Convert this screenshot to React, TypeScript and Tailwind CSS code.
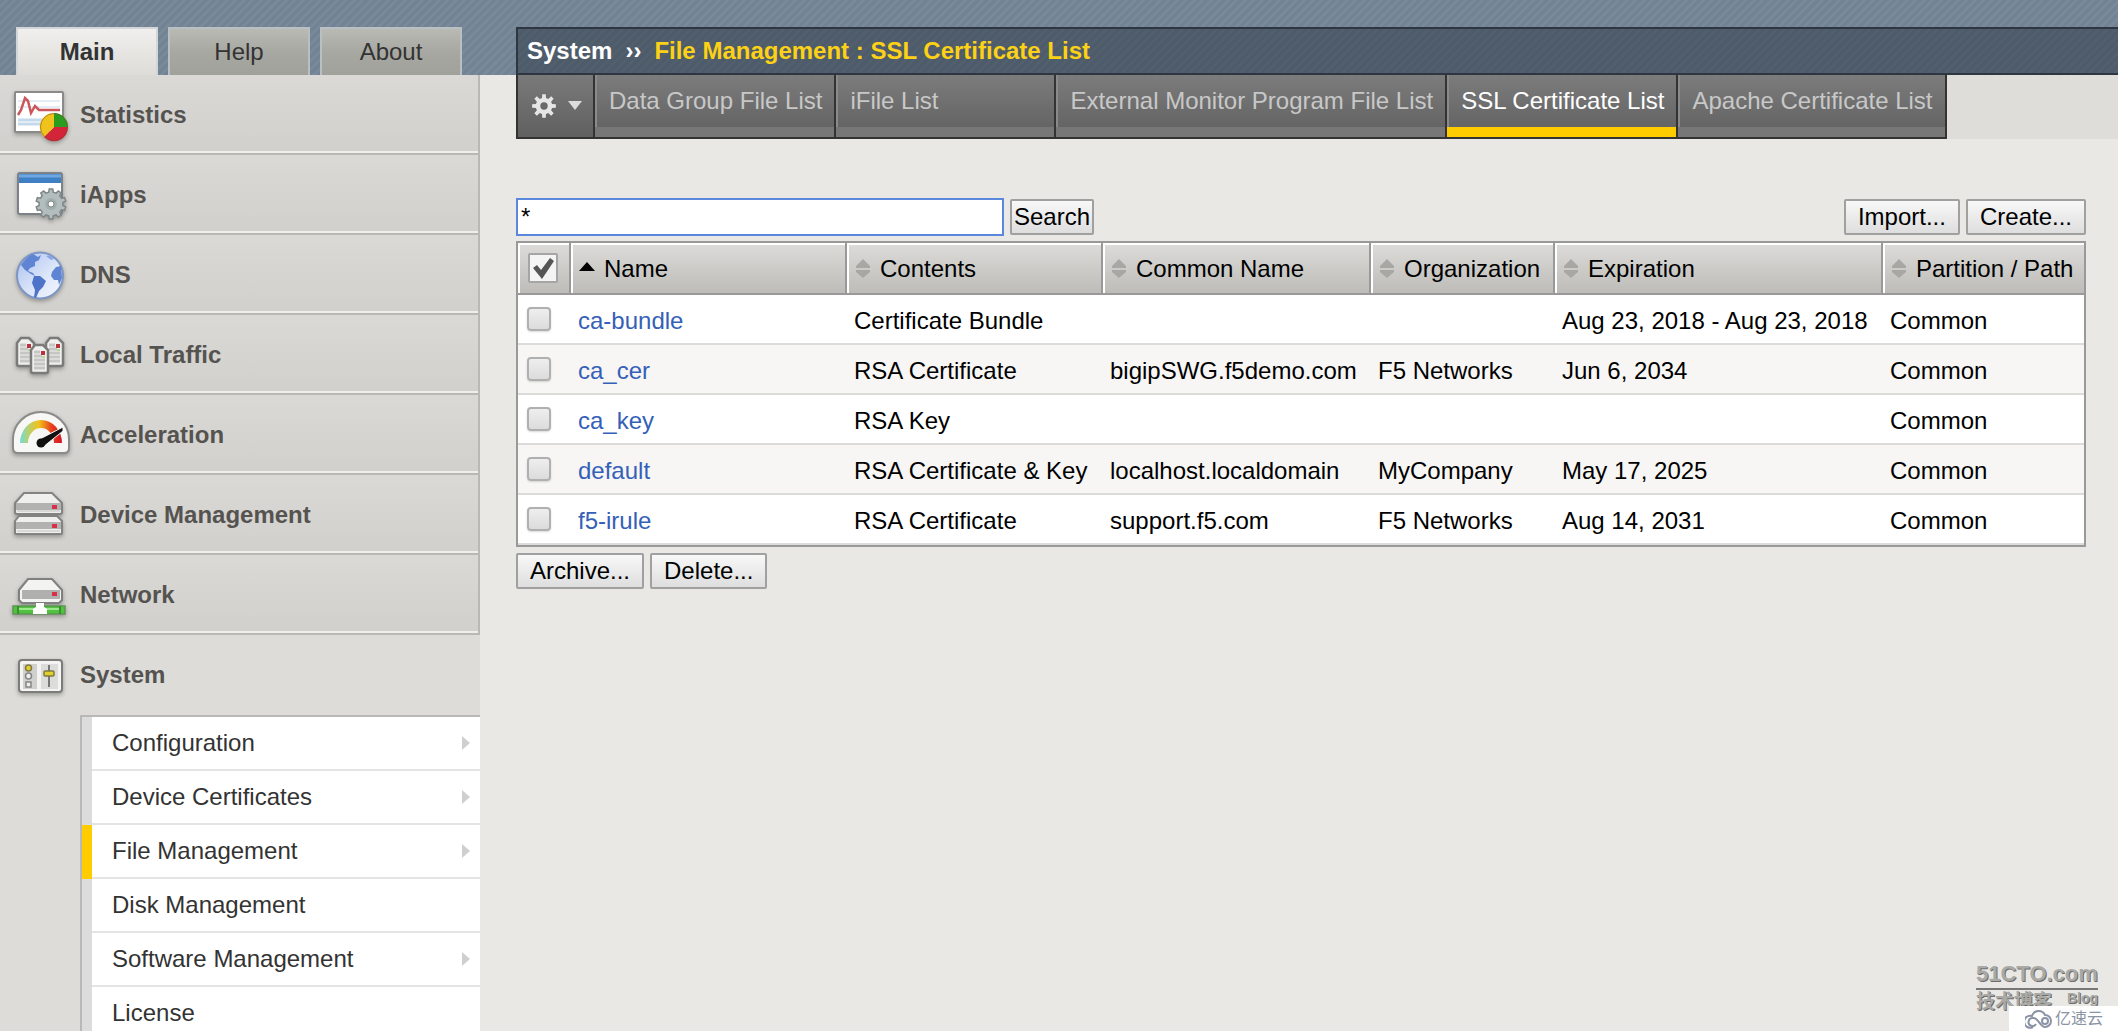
import { useState } from 'react';
import type { ReactNode } from 'react';
import clsx from 'clsx';

interface Cert {
  name: string;
  contents: string;
  commonName?: string;
  organization?: string;
  expiration?: string;
  partition: string;
}

const certs: Cert[] = [
  { name: 'ca-bundle', contents: 'Certificate Bundle', expiration: 'Aug 23, 2018 - Aug 23, 2018', partition: 'Common' },
  { name: 'ca_cer', contents: 'RSA Certificate', commonName: 'bigipSWG.f5demo.com', organization: 'F5 Networks', expiration: 'Jun 6, 2034', partition: 'Common' },
  { name: 'ca_key', contents: 'RSA Key', partition: 'Common' },
  { name: 'default', contents: 'RSA Certificate & Key', commonName: 'localhost.localdomain', organization: 'MyCompany', expiration: 'May 17, 2025', partition: 'Common' },
  { name: 'f5-irule', contents: 'RSA Certificate', commonName: 'support.f5.com', organization: 'F5 Networks', expiration: 'Aug 14, 2031', partition: 'Common' },
];

const columns = ['Name', 'Contents', 'Common Name', 'Organization', 'Expiration', 'Partition / Path'];

const tabs = [
  'Data Group File List',
  'iFile List',
  'External Monitor Program File List',
  'SSL Certificate List',
  'Apache Certificate List',
];

const submenu = [
  { label: 'Configuration', more: true },
  { label: 'Device Certificates', more: true },
  { label: 'File Management', more: true, active: true },
  { label: 'Disk Management' },
  { label: 'Software Management', more: true },
  { label: 'License' },
];

function gearPath(cx: number, cy: number, outer: number, inner: number, teeth: number) {
  const step = (Math.PI * 2) / teeth;
  const points: string[] = [];
  for (let i = 0; i < teeth; i++) {
    const a = i * step - Math.PI / 2;
    const corners: [number, number][] = [
      [-0.3, inner],
      [-0.19, outer],
      [0.19, outer],
      [0.3, inner],
    ];
    corners.forEach(([t, r]) => {
      points.push(`${(cx + Math.cos(a + t * step) * r).toFixed(2)} ${(cy + Math.sin(a + t * step) * r).toFixed(2)}`);
    });
  }
  return `M${points.join('L')}Z`;
}

function Icon({ children }: { children: ReactNode }) {
  return (
    <svg viewBox="0 0 60 60" className="h-15 w-15 shrink-0 drop-shadow-[0_2px_2px_rgba(0,0,0,0.3)]" aria-hidden="true">
      {children}
    </svg>
  );
}

function StatisticsIcon() {
  return (
    <Icon>
      <rect x="5" y="7" width="48" height="40" rx="1" fill="#fff" stroke="#8a8a8a" strokeWidth="2" />
      <path d="M8 16H50M8 22H50" stroke="#e4ecf4" strokeWidth="2" />
      <path d="M8 35H50M8 39H50" stroke="#c3d9ec" strokeWidth="3" />
      <path d="M8 30 11 25 15 13 18 16 21 28 25 21 29 25H50" fill="none" stroke="#c9575b" strokeWidth="2.5" />
      <path d="M44 42V28A14 14 0 0 1 58 42Z" fill="#2a9d1f" />
      <path d="M44 42H58A14 14 0 0 1 34 52Z" fill="#d3243a" />
      <path d="M44 42 34 52A14 14 0 0 1 44 28Z" fill="#f0c21c" />
      <circle cx="44" cy="42" r="13.5" fill="none" stroke="#7a4a20" strokeOpacity="0.5" />
    </Icon>
  );
}

function IAppsIcon() {
  return (
    <Icon>
      <rect x="8" y="8" width="44" height="41" rx="2" fill="#fff" stroke="#7c8288" strokeWidth="2" />
      <rect x="9" y="9" width="42" height="9" fill="#3f7fc4" />
      <path d="M9 11H51" stroke="#6fa7e0" strokeWidth="3" />
      <path d={gearPath(41, 39, 15, 12, 10)} fill="#b3bdbd" stroke="#7d8787" strokeWidth="1.5" />
      <circle cx="41" cy="39" r="6" fill="#a2adad" />
      <circle cx="41" cy="39" r="3" fill="#fff" stroke="#7d8787" />
    </Icon>
  );
}

function DnsIcon() {
  return (
    <Icon>
      <defs>
        <linearGradient id="sea" x1="0" y1="0" x2="1" y2="1">
          <stop offset="0" stopColor="#a9c0ee" />
          <stop offset="0.6" stopColor="#dfe8fa" />
          <stop offset="1" stopColor="#f4f8ff" />
        </linearGradient>
      </defs>
      <circle cx="30" cy="30.5" r="23" fill="url(#sea)" stroke="#7d96c4" strokeWidth="2" />
      <path
        d="M11 20C14 15 18 11 23 9L28 12 31 10 29 15 25 17 25 21 20 23 18 26 23 28 25 31 21 29 15 25Z"
        fill="#5e84d3"
      />
      <path d="M24 31 30 31 36 36 33 42 29 46 26 53 24 52 25 45 22 38Z" fill="#4d74c8" />
      <path d="M51 21 46 22 42 27 41 31 44 35 48 35 49 40 52 33Z" fill="#5e84d3" />
      <path d="M36 11 40 10 44 14 41 15Z" fill="#8aa6e2" />
    </Icon>
  );
}

function Server({ x, y }: { x: number; y: number }) {
  return (
    <g transform={`translate(${x} ${y})`}>
      <path d="M1 6 5 1H13L18 6V27Q18 29 16 29H3Q1 29 1 27Z" fill="#f0f0ef" stroke="#7b7b7a" strokeWidth="2.5" />
      <path d="M4 8H10M4 12H12M4 16H15M4 20H15M4 24H15" stroke="#c6c6c5" strokeWidth="3" />
      <rect x="11" y="7" width="4" height="4" fill="#b8323c" />
      <rect x="12" y="12" width="3" height="2" fill="#b8d890" />
    </g>
  );
}

function LocalTrafficIcon() {
  return (
    <Icon>
      <Server x={6} y={12} />
      <Server x={35} y={12} />
      <Server x={20} y={19} />
    </Icon>
  );
}

function AccelerationIcon() {
  return (
    <Icon>
      <defs>
        <linearGradient id="dial">
          <stop offset="0" stopColor="#6fdcd8" />
          <stop offset="0.2" stopColor="#b8d070" />
          <stop offset="0.45" stopColor="#f2c21a" />
          <stop offset="0.75" stopColor="#e8401c" />
          <stop offset="1" stopColor="#d3142a" />
        </linearGradient>
      </defs>
      <path d="M3 34A28 27 0 0 1 59 34V43Q59 48 54 48H8Q3 48 3 43Z" fill="#f7f7f5" stroke="#8b8b8a" strokeWidth="2" />
      <path d="M10 38A21 23 0 0 1 52 38H44A13 15 0 0 0 18 38Z" fill="url(#dial)" />
      <path d="M28 35 53 22 53 26 33 42Z" fill="#111" stroke="#f7f7f5" strokeWidth="1" />
      <circle cx="31" cy="38" r="4.5" fill="#111" />
    </Icon>
  );
}

function Box({ y, low }: { y: number; low?: boolean }) {
  return (
    <g transform={`translate(0 ${y})`}>
      <path
        d={low ? 'M5 6 9 1H47L52 6V18Q52 19 51 19H6Q5 19 5 18Z' : 'M5 11 14 1H42L52 11V20Q52 22 50 22H7Q5 22 5 20Z'}
        fill="#efefee"
        stroke="#838382"
        strokeWidth="2"
      />
      <rect x="6" y={low ? 7 : 11} width="45" height="7" fill="#b2b2b1" />
      <path d={low ? 'M7 16H50' : 'M7 19H50'} stroke="#d8d8d7" strokeWidth="2" />
      <rect x="42" y={low ? 9 : 13} width="5" height="4" fill="#d8304a" />
    </g>
  );
}

function DeviceIcon() {
  return (
    <Icon>
      <Box y={30} low />
      <Box y={7} />
    </Icon>
  );
}

function NetworkIcon() {
  return (
    <Icon>
      <path d="M9 25 18 14H42L52 25V35L49 38H12L9 35Z" fill="#f3f3f2" stroke="#80807f" strokeWidth="2" />
      <rect x="12" y="25" width="38" height="9" fill="#b0b0af" />
      <rect x="42" y="27" width="5" height="4" fill="#d8304a" />
      <rect x="3" y="41" width="52" height="8" fill="#4fc23e" stroke="#5f9455" strokeWidth="1.5" />
      <path d="M9 44H49" stroke="#9be88c" strokeWidth="2" />
      <path d="M8 41V49M50 41V49" stroke="#3e8d35" strokeWidth="2" />
      <path d="M26 38H34V42L37 44V49H23V44L26 42Z" fill="#fff" />
    </Icon>
  );
}

function SystemIcon() {
  return (
    <Icon>
      <rect x="9" y="15" width="43" height="32" rx="3" fill="#f4f4f3" stroke="#7c7c7b" strokeWidth="2" />
      <rect x="13" y="19" width="14" height="25" fill="#d0d0cf" />
      <rect x="31" y="19" width="17" height="25" fill="#dcdcdb" />
      <circle cx="18.5" cy="23" r="3" fill="#e3cf2a" stroke="#7e7a46" strokeWidth="1.5" />
      <circle cx="18.5" cy="31" r="3" fill="#eee" stroke="#858584" strokeWidth="1.5" />
      <rect x="16" y="37" width="5" height="5" fill="#eee" stroke="#858584" strokeWidth="1.5" />
      <path d="M39 20V42" stroke="#777" strokeWidth="2" />
      <rect x="34" y="26" width="10" height="5" rx="1" fill="#e3cf2a" stroke="#7e7a46" strokeWidth="1.5" />
    </Icon>
  );
}

const sections = [
  { label: 'Statistics', icon: <StatisticsIcon /> },
  { label: 'iApps', icon: <IAppsIcon /> },
  { label: 'DNS', icon: <DnsIcon /> },
  { label: 'Local Traffic', icon: <LocalTrafficIcon /> },
  { label: 'Acceleration', icon: <AccelerationIcon /> },
  { label: 'Device Management', icon: <DeviceIcon /> },
  { label: 'Network', icon: <NetworkIcon /> },
];

function SortIcon({ sorted }: { sorted?: boolean }) {
  return (
    <svg viewBox="0 0 16 20" className="h-5 w-4 shrink-0" aria-hidden="true">
      {sorted ? (
        <path d="M8 3 16 12H0Z" fill="#000" />
      ) : (
        <path d="M8 0 15 7V9H1V7ZM8 19 15 13V11H1V13Z" fill="#a8a7a3" />
      )}
    </svg>
  );
}

function Button({ children, tight, type = 'button' }: { children: ReactNode; tight?: boolean; type?: 'button' | 'submit' }) {
  return (
    <button
      type={type}
      className={clsx(
        'h-9 rounded-xs border-2 border-[#a0a0a0] bg-linear-to-b from-[#f8f8f8] to-[#dedede] text-2xl leading-8 text-black',
        tight ? 'px-0.5' : 'px-3'
      )}
    >
      {children}
    </button>
  );
}

function Header() {
  return (
    <header className="flex h-[75px] shrink-0 items-end bg-[#778797] bg-[repeating-linear-gradient(135deg,#728395_0px,#728395_3px,#7a8a99_4px,#7a8a99_6px)]">
      <nav className="flex w-[480px] shrink-0 gap-2.5 pl-4">
        {['Main', 'Help', 'About'].map((item, i) => (
          <a
            key={item}
            href="#"
            className={clsx(
              'flex h-12 w-[142px] items-center justify-center border-2 border-b-0 text-2xl text-[#333]',
              i === 0
                ? 'border-[#d3d6d8] bg-linear-to-b from-[#f0efed] to-[#dddcd8] font-bold'
                : 'border-[#b9c0c4] bg-linear-to-b from-[#babab5] via-[#a8a8a2] to-[#a1a19c]'
            )}
          >
            {item}
          </a>
        ))}
      </nav>
      <h1 className="ml-9 flex h-12 flex-1 items-center border-2 border-r-0 border-[#2e3641] bg-[#222b36]/45 pl-[9px] text-2xl font-bold text-white">
        System <span className="px-[13px]">››</span>
        <span className="text-[#fcd116]">File Management : SSL Certificate List</span>
      </h1>
    </header>
  );
}

function Sidebar() {
  return (
    <aside className="flex w-[480px] shrink-0 flex-col bg-[#dddcd8] text-2xl">
      {sections.map((s) => (
        <a
          key={s.label}
          href="#"
          className="flex h-20 shrink-0 items-center gap-2.5 border-r-2 border-b-2 border-[#b9b8b4] bg-linear-to-b from-[#dad9d5] to-[#d1d0cc] pt-0.5 pl-2.5 font-bold text-[#555350] shadow-[inset_0_-2px_0_#efeeea]"
        >
          {s.icon}
          {s.label}
        </a>
      ))}
      <a href="#" className="flex h-20 shrink-0 items-center gap-2.5 pl-2.5 font-bold text-[#555350]">
        <SystemIcon />
        System
      </a>
      <ul className="ml-20 flex-1 border-t-2 border-l-2 border-[#b9b8b8] bg-[#dcdcdc]">
        {submenu.map((item) => (
          <li key={item.label} className={clsx('h-[54px] pl-2.5', item.active && 'bg-[#fc0]')}>
            <a
              href="#"
              className="flex h-full items-center justify-between border-b-2 border-[#e4e4e4] bg-white pr-2.5 pl-5 text-[#333]"
            >
              {item.label}
              {item.more && (
                <svg viewBox="0 0 8 14" className="h-3.5 w-2" aria-hidden="true">
                  <path d="M0 0 8 7 0 14Z" fill="#cfcfcf" />
                </svg>
              )}
            </a>
          </li>
        ))}
      </ul>
    </aside>
  );
}

function TabBar() {
  return (
    <nav className="flex h-16 bg-[#deddd9] text-2xl text-[#c8c8c8]">
      <button
        type="button"
        aria-label="Options"
        className="flex w-[79px] shrink-0 items-center justify-center gap-3 border-2 border-t-0 border-[#333] bg-linear-to-b from-[#7a7a7a] to-[#606060] pl-0.5"
      >
        <svg viewBox="0 0 26 26" className="h-6 w-6" aria-hidden="true">
          <path d={gearPath(13, 13, 13, 9, 8)} fill="#e6e6e6" />
          <circle cx="13" cy="13" r="4" fill="#6a6a6a" />
        </svg>
        <svg viewBox="0 0 14 10" className="h-2.5 w-3.5" aria-hidden="true">
          <path d="M0 0H14L7 9Z" fill="#dcdcdc" />
        </svg>
      </button>
      {tabs.map((tab) => {
        const active = tab === 'SSL Certificate List';
        return (
          <a
            key={tab}
            href="#"
            className={clsx(
              'flex min-w-[220px] flex-col border-r-2 border-b-2 border-[#333] bg-linear-to-b from-[#7c7c7c] to-[#606060] whitespace-nowrap',
              active && 'text-white'
            )}
          >
            <span className="flex flex-1 items-center border-l-2 border-[#8a8a8a] px-3">{tab}</span>
            <span className={clsx('h-2.5', active ? 'bg-[#fc0]' : 'bg-[#777]')} />
          </a>
        );
      })}
    </nav>
  );
}

function CertTable() {
  const [selected, setSelected] = useState<string[]>([]);

  const toggle = (name: string) =>
    setSelected((prev) => (prev.includes(name) ? prev.filter((n) => n !== name) : [...prev, name]));

  return (
    <table className="mt-[5px] w-full table-fixed border-separate border-spacing-0 border-2 border-[#999] text-left text-2xl text-black">
      <colgroup>
        <col className="w-[51px]" />
        <col className="w-[276px]" />
        <col className="w-[256px]" />
        <col className="w-[268px]" />
        <col className="w-[184px]" />
        <col className="w-[328px]" />
        <col className="w-[203px]" />
      </colgroup>
      <thead>
        <tr className="h-[52px]">
          <th className="border-b-2 border-[#999] bg-linear-to-b from-[#dddcda] to-[#bdbcb8] pl-2.5 shadow-[inset_2px_2px_0_#fff]">
            <label className="relative block h-[30px] w-[30px]">
              <input
                type="checkbox"
                aria-label="Select all"
                className="block h-full w-full appearance-none rounded-xs border-2 border-[#a5a5a5] bg-[#f4f4f4]"
              />
              <svg viewBox="0 0 30 30" className="pointer-events-none absolute inset-0" aria-hidden="true">
                <path d="M5 15 9 12 13 17 22 5 26 8 14 26Z" fill="#555" />
              </svg>
            </label>
          </th>
          {columns.map((col, i) => (
            <th
              key={col}
              className="border-b-2 border-l-2 border-[#999] bg-linear-to-b from-[#dddcda] to-[#bdbcb8] pt-0.5 pl-2 font-normal whitespace-nowrap shadow-[inset_2px_2px_0_#fff]"
            >
              <span className="flex items-center gap-[9px]">
                <SortIcon sorted={i === 0} />
                {col}
              </span>
            </th>
          ))}
        </tr>
      </thead>
      <tbody className="whitespace-nowrap">
        {certs.map((cert) => (
          <tr
            key={cert.name}
            className="h-[50px] bg-white even:bg-[#f7f6f5] [&>td]:border-b-2 [&>td]:border-[#dbdbd9] [&>td]:pt-[3px] [&>td]:pl-[9px]"
          >
            <td>
              <input
                type="checkbox"
                aria-label={cert.name}
                checked={selected.includes(cert.name)}
                onChange={() => toggle(cert.name)}
                className="mb-[3px] block h-6 w-6 appearance-none rounded border-2 border-[#b0b0b0] bg-linear-to-b from-[#eee] to-[#dcdcdc] shadow-[0_1px_2px_rgba(0,0,0,0.15)] checked:bg-[#555]"
              />
            </td>
            <td>
              <a href="#" className="text-[#3560b8]">
                {cert.name}
              </a>
            </td>
            <td>{cert.contents}</td>
            <td>{cert.commonName}</td>
            <td>{cert.organization}</td>
            <td>{cert.expiration}</td>
            <td>{cert.partition}</td>
          </tr>
        ))}
      </tbody>
    </table>
  );
}

function Watermark() {
  return (
    <div className="pointer-events-none absolute right-0 bottom-0 flex flex-col items-end">
      <div className="mr-5 w-[122px] text-[#a9a9a6] [text-shadow:1px_1px_0_#6d6d6b]">
        <div className="border-b-2 border-[#777] text-[22px] leading-7 font-bold">51CTO.com</div>
        <div className="flex h-4 justify-between font-bold">
          <span className="font-['Liberation_Sans','Noto_Sans_CJK_SC',sans-serif] text-[19px] leading-6">技术博客</span>
          <span className="text-sm leading-4">Blog</span>
        </div>
      </div>
      <div className="flex h-[25px] w-[109px] items-center gap-0.5 bg-white pl-4 font-['Liberation_Sans','Noto_Sans_CJK_SC',sans-serif] text-base text-[#8b93a5]">
        <svg viewBox="0 0 28 20" className="h-5 w-7" fill="none" stroke="#8b93a5" strokeWidth="2" aria-hidden="true">
          <path d="M8 18A6 6 0 1 1 7 7 7 7 0 0 1 20 6 6 6 0 1 1 20 18C15 18 13 8 8 9A4 4 0 1 0 11 15" />
          <circle cx="20" cy="12" r="3" />
        </svg>
        亿速云
      </div>
    </div>
  );
}

export default function App() {
  const [query, setQuery] = useState('*');

  return (
    <div className="relative flex h-screen flex-col overflow-hidden bg-[#e9e8e5] font-['Liberation_Sans',Arial,sans-serif]">
      <Header />
      <div className="flex min-h-0 flex-1">
        <Sidebar />
        <main className="min-w-0 flex-1 pl-9">
          <TabBar />
          <div className="pt-[59px] pr-8">
            <form className="flex items-center gap-1.5" onSubmit={(e) => e.preventDefault()}>
              <input
                type="text"
                aria-label="Search certificates"
                value={query}
                onChange={(e) => setQuery(e.target.value)}
                className="h-[38px] w-[488px] border-2 border-[#5b87dc] bg-white px-[3px] text-2xl text-black outline-none"
              />
              <Button type="submit" tight>
                Search
              </Button>
              <div className="ml-auto flex gap-1.5">
                <Button>Import...</Button>
                <Button>Create...</Button>
              </div>
            </form>
            <CertTable />
            <div className="mt-1.5 flex gap-1.5">
              <Button>Archive...</Button>
              <Button>Delete...</Button>
            </div>
          </div>
        </main>
      </div>
      <Watermark />
    </div>
  );
}
